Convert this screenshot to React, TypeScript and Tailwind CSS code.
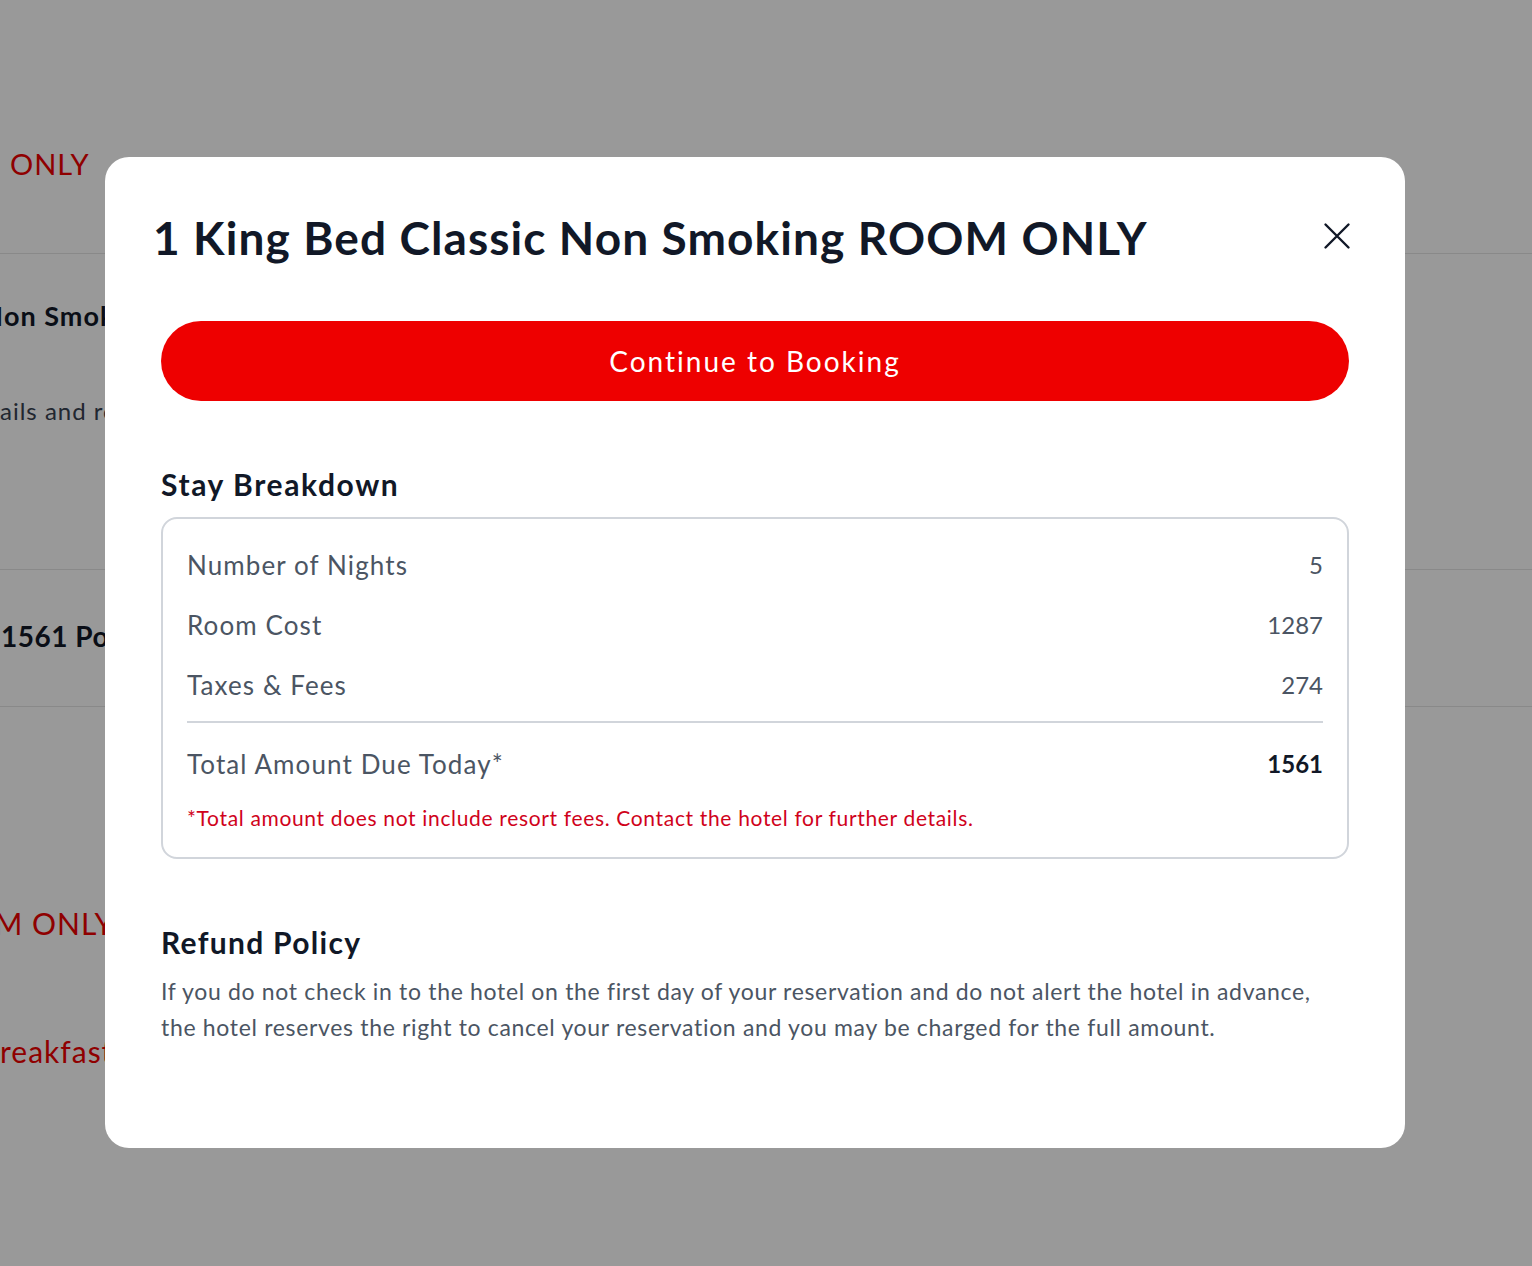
import React from "react";

function Clip({
  edge,
  hidden,
  shown,
  className,
}: {
  edge: number;
  hidden: string;
  shown: string;
  className: string;
}) {
  // part of a line that runs off the left edge of the page
  return (
    <div className={`flex whitespace-nowrap ${className}`}>
      <span className="flex justify-end shrink-0" style={{ width: edge }}>
        {hidden}
      </span>
      <span>{shown}</span>
    </div>
  );
}

function Row({ label, value, bold }: { label: string; value: string; bold?: boolean }) {
  return (
    <div className="flex h-[36px] items-center justify-between text-[26px] leading-[36px] text-[#4b5563]">
      <span className="tracking-[1.1px]">{label}</span>
      <span className={bold ? "text-[24px] font-bold text-[#111827]" : "text-[24px]"}>{value}</span>
    </div>
  );
}

export default function App() {
  return (
    <div className="relative h-[1266px] w-full overflow-hidden bg-white font-['Lato',_sans-serif]">
      {/* page behind the dialog */}
      <div className="flex flex-col">
        <Clip
          edge={10}
          hidden={"ROOM\u00a0"}
          shown="ONLY"
          className="mt-[144px] h-[40px] text-[29px] leading-[40px] tracking-[1px] text-[#ee0000]"
        />
        <div className="mt-[69px] h-px bg-[#e4e4e4]" />
        <Clip
          edge={4}
          hidden="1 King Bed Classic N"
          shown="on Smoking ROOM ONLY"
          className="mt-[42px] h-[40px] text-[27px] font-bold leading-[40px] tracking-[1px] text-[#111827]"
        />
        <Clip
          edge={0}
          hidden="Room det"
          shown="ails and room info"
          className="mt-[55px] h-[40px] text-[24px] leading-[40px] tracking-[1px] text-[#374151]"
        />
        <div className="mt-[138px] h-px bg-[#e4e4e4]" />
        <Clip
          edge={1}
          hidden=""
          shown="1561 Points"
          className="mt-[46px] h-[40px] text-[28px] font-bold leading-[40px] tracking-[0.5px] text-[#111827]"
        />
        <div className="mt-[50px] h-px bg-[#e4e4e4]" />
        <Clip
          edge={32}
          hidden={"ROOM\u00a0"}
          shown="ONLY"
          className="mt-[196px] h-[40px] text-[30px] leading-[40px] tracking-[1px] text-[#ee0000]"
        />
        <Clip
          edge={0}
          hidden="B"
          shown="reakfast Included"
          className="mt-[88px] h-[40px] text-[30px] leading-[40px] tracking-[1px] text-[#ee0000]"
        />
      </div>

      {/* overlay + dialog */}
      <div className="absolute inset-0 bg-black/40 pl-[105px] pt-[157px]">
        <div className="h-[991px] w-[1300px] rounded-3xl bg-white px-12 pt-[53px]">
          <div className="flex items-center justify-between">
            <h2 className="text-[46px] font-bold leading-[56px] tracking-[1.1px] text-[#111827]">
              1 King Bed Classic Non Smoking ROOM ONLY
            </h2>
            <button className="mb-[5px] mr-[4px] flex h-[32px] w-[32px] items-center justify-center text-[#111827]">
              <svg width="28" height="28" viewBox="0 0 28 28" fill="none">
                <path
                  d="M2.5 2.5 L25.5 25.5 M25.5 2.5 L2.5 25.5"
                  stroke="currentColor"
                  strokeWidth="2.4"
                  strokeLinecap="round"
                />
              </svg>
            </button>
          </div>

          <div className="px-2">
            <button className="mt-[55px] flex h-[80px] w-full items-center justify-center rounded-full bg-[#ee0000] text-[28px] tracking-[2px] text-white">
              Continue to Booking
            </button>

            <h3 className="mt-[65px] text-[30px] font-bold leading-[36px] tracking-[1.6px] text-[#111827]">
              Stay Breakdown
            </h3>
            <div className="mt-[15px] rounded-2xl border-2 border-[#d1d5db] px-6 pb-[25px] pt-[28px]">
              <div className="flex flex-col gap-6">
                <Row label="Number of Nights" value="5" />
                <Row label="Room Cost" value="1287" />
                <Row label="Taxes & Fees" value="274" />
              </div>
              <div className="mt-[18px] h-[2px] bg-[#d1d5db]" />
              <div className="mt-[23px]">
                <Row label="Total Amount Due Today*" value="1561" bold />
              </div>
              <p className="mt-[22px] text-[21px] leading-[28px] tracking-[0.66px] text-[#d0021b]">
                *Total amount does not include resort fees. Contact the hotel for further details.
              </p>
            </div>

            <h3 className="mt-[65px] text-[30px] font-bold leading-[36px] tracking-[1.3px] text-[#111827]">
              Refund Policy
            </h3>
            <p className="mt-[13px] text-[23px] leading-[36px] tracking-[0.67px] text-[#4b5563]">
              If you do not check in to the hotel on the first day of your reservation and do not alert the hotel in advance,
              <br />
              the hotel reserves the right to cancel your reservation and you may be charged for the full amount.
            </p>
          </div>
        </div>
      </div>
    </div>
  );
}
